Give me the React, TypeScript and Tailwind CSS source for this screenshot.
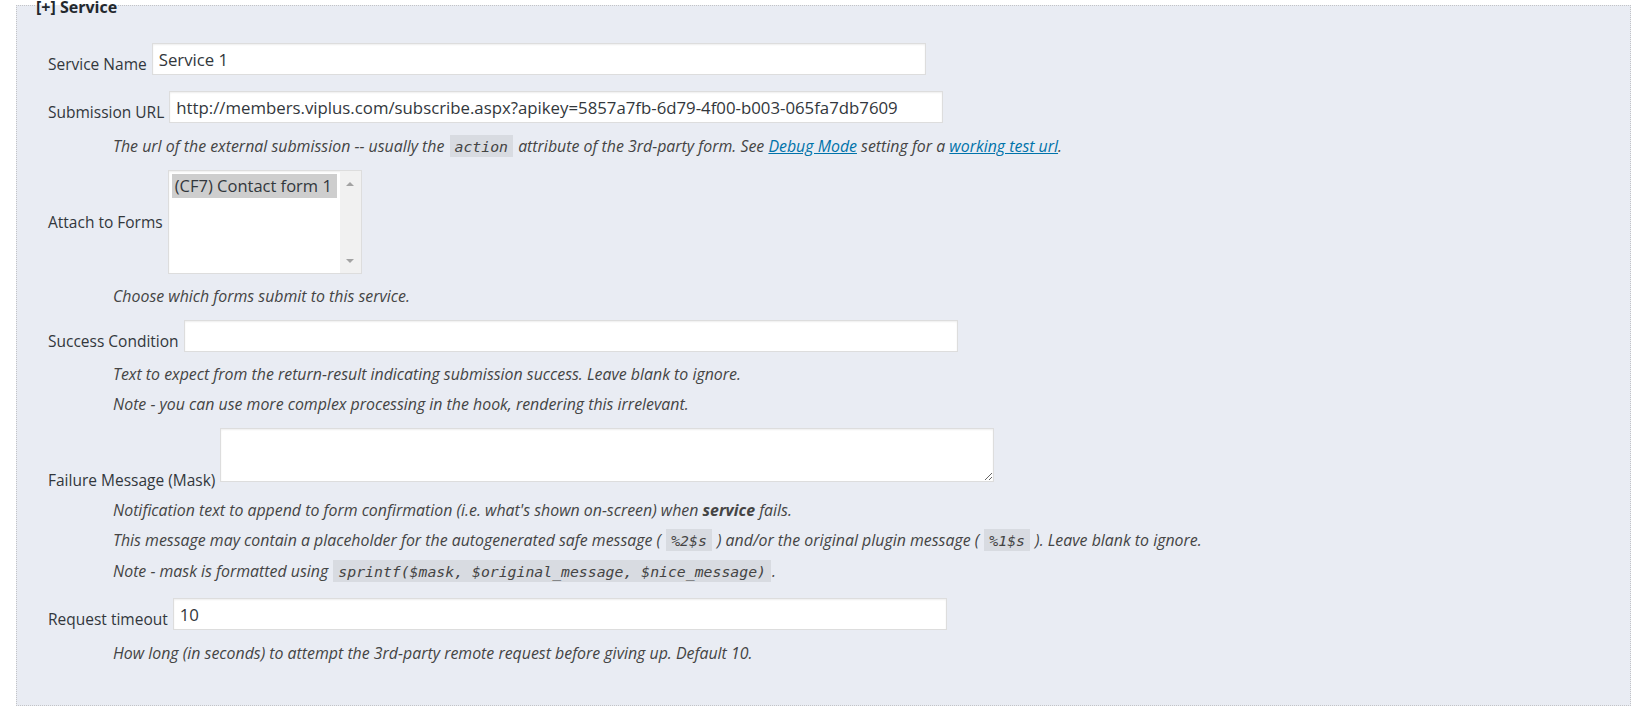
import React from "react";

const inputCls =
  "h-[32px] w-[774px] border border-[#dddddd] bg-white pl-[6px] text-[16.8px] text-[#32373c] shadow-[inset_0_1px_2px_rgba(0,0,0,0.07)] outline-none";

const Code = ({ children }: { children: React.ReactNode }) => (
  <code className="mx-px bg-[rgba(0,0,0,0.07)] px-[5px] pt-[3px] pb-[2px] font-['DejaVu_Sans_Mono',monospace] text-[14.8px] italic text-[#444]">
    {children}
  </code>
);

const Desc = ({ mt, children }: { mt: string; children: React.ReactNode }) => (
  <p className={`${mt} ml-[65px] text-[15.9px] italic leading-5 text-[#444]`}>{children}</p>
);

const Label = ({ children, extra = "mb-[1px]" }: { children: React.ReactNode; extra?: string }) => (
  <label className={`text-[15.5px] leading-5 whitespace-nowrap text-[#32373c] ${extra}`}>{children}</label>
);

const ListBox = () => (
  <div className="flex h-[104px] w-[194px] border border-[#dddddd] bg-white shadow-[inset_0_1px_2px_rgba(0,0,0,0.07)]">
    <div className="flex-1 p-[3px]">
      <div className="h-[24px] bg-[#cecece] pl-[3px] text-[16.5px] leading-[24px] whitespace-nowrap text-[#32373c]">
        (CF7) Contact form 1
      </div>
    </div>
    <div className="flex w-[21px] flex-col items-center justify-between bg-[#f1f1f1] pt-[11px] pb-[10px]">
      <div className="h-0 w-0 border-x-[4px] border-b-[4px] border-x-transparent border-b-[#a3a3a3]" />
      <div className="h-0 w-0 border-x-[4px] border-t-[4px] border-x-transparent border-t-[#a3a3a3]" />
    </div>
  </div>
);

export default function App() {
  return (
    <div className="h-[714px] bg-white pl-4 pr-[13px] font-['Open_Sans',sans-serif]">
      <fieldset className="border border-dotted border-[#c3c4c7] bg-[#e9ecf3] px-0 pb-[42px]">
        <legend className="relative top-[2px] ml-[19px] px-0 text-[16px] font-bold leading-[10px] text-[#23282d]">
          [+] Service
        </legend>
        <div className="pl-[31px]">
          <div className="mt-[33px] flex items-end gap-[5px]">
            <Label>Service Name</Label>
            <input className={inputCls} defaultValue="Service 1" />
          </div>

          <div className="mt-[16px] flex items-end gap-[5px]">
            <Label>Submission URL</Label>
            <input
              className={inputCls}
              defaultValue="http://members.viplus.com/subscribe.aspx?apikey=5857a7fb-6d79-4f00-b003-065fa7db7609"
            />
          </div>
          <Desc mt="mt-[13px]">
            The url of the external submission -- usually the <Code>action</Code> attribute of the 3rd-party form. See{" "}
            <a href="#" className="text-[#0073aa] underline">Debug Mode</a> setting for a{" "}
            <a href="#" className="text-[#0073aa] underline">working test url</a>.
          </Desc>

          <div className="mt-[13px] flex items-center gap-[5px]">
            <Label extra="">Attach to Forms</Label>
            <ListBox />
          </div>
          <Desc mt="mt-[12px]">Choose which forms submit to this service.</Desc>

          <div className="mt-[14px] flex items-end gap-[5px]">
            <Label>Success Condition</Label>
            <input className={inputCls} defaultValue="" />
          </div>
          <Desc mt="mt-[12px]">Text to expect from the return-result indicating submission success. Leave blank to ignore.</Desc>
          <Desc mt="mt-[10px]">Note - you can use more complex processing in the hook, rendering this irrelevant.</Desc>

          <div className="mt-[14px] flex items-end gap-[5px]">
            <Label extra="-mb-[8px]">Failure Message (Mask)</Label>
            <textarea className="h-[54px] w-[774px] border border-[#dddddd] bg-white shadow-[inset_0_1px_2px_rgba(0,0,0,0.07)] outline-none" />
          </div>
          <Desc mt="mt-[18px]">
            Notification text to append to form confirmation (i.e. what's shown on-screen) when <b>service</b> fails.
          </Desc>
          <Desc mt="mt-[10px]">
            This message may contain a placeholder for the autogenerated safe message ( <Code>%2$s</Code> ) and/or the
            original plugin message ( <Code>%1$s</Code> ). Leave blank to ignore.
          </Desc>
          <Desc mt="mt-[10px]">
            Note - mask is formatted using <Code>sprintf($mask, $original_message, $nice_message)</Code>.
          </Desc>

          <div className="mt-[16px] flex items-end gap-[5px]">
            <Label>Request timeout</Label>
            <input className={inputCls} defaultValue="10" />
          </div>
          <Desc mt="mt-[13px]">How long (in seconds) to attempt the 3rd-party remote request before giving up. Default 10.</Desc>
        </div>
      </fieldset>
    </div>
  );
}
